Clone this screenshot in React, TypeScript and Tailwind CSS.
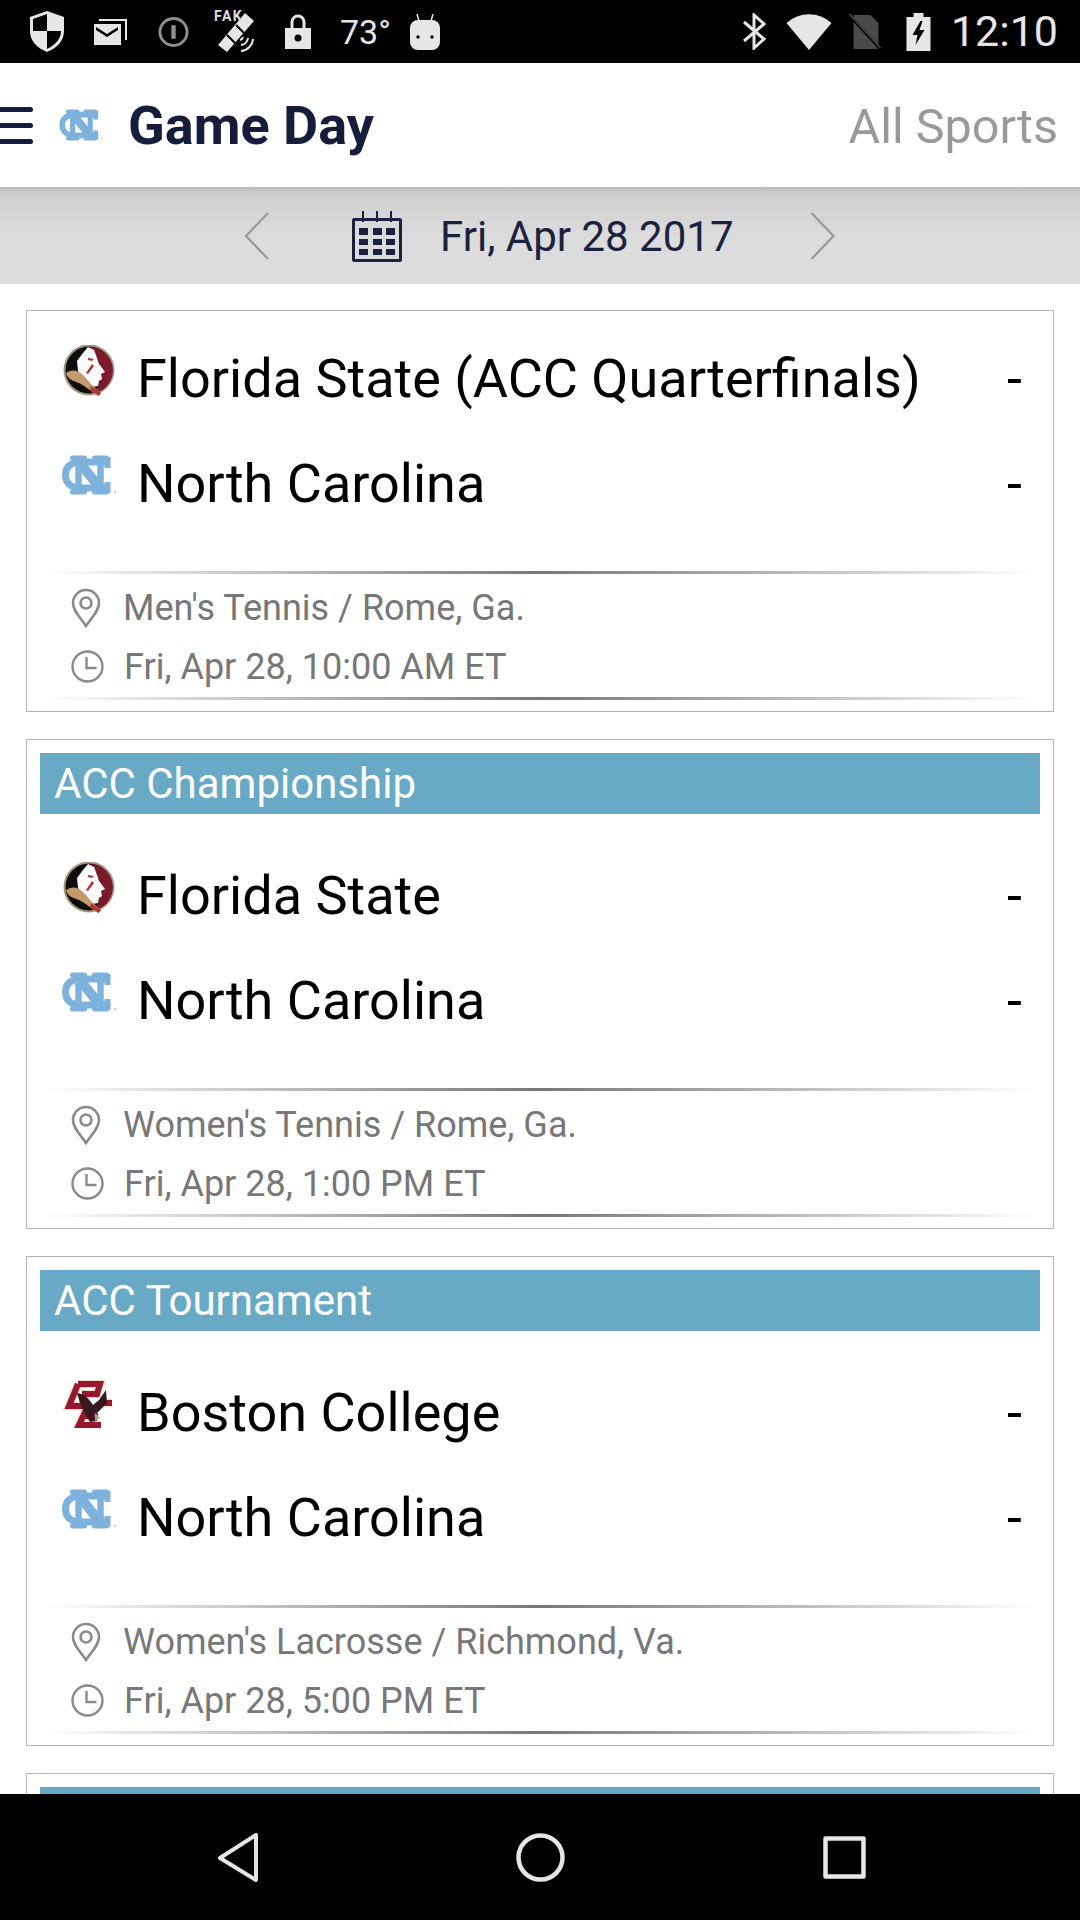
import React from "react";

const FONT = "font-['Roboto','Liberation_Sans',sans-serif]";

function NCLogo({ className }: { className: string }) {
  return (
    <svg viewBox="0 0 55 40" className={className} fill="none" stroke="#7db2dc">
      <path d="M44 7H20C8 7 4 13 4 20s4 13 16 13h24" strokeWidth="7" />
      <path d="M16 5 40 35" strokeWidth="10" />
      <path d="M17 4v32M39 4v32" strokeWidth="6.5" />
      <path d="M46 2v11M46 27v11" strokeWidth="6" />
      <path d="M11 3h12M11 37h12M33 3h12M33 37h12" strokeWidth="5" strokeLinecap="round" />
      <circle cx="53.5" cy="37" r="1.2" fill="#b9d3e6" stroke="none" />
    </svg>
  );
}

function FSULogo({ className }: { className: string }) {
  return (
    <svg viewBox="0 0 52 52" className={className}>
      <circle cx="26" cy="25" r="25.5" fill="#a3957a" />
      <circle cx="26" cy="25" r="23.5" fill="#0d0d0d" />
      <path d="M27 2a23.5 23.5 0 0 1 6 46L38 30 31 10Z" fill="#7c1a2b" />
      <path d="M20 8 25 2l6 3 3 8 2 6 6 8-4 2 1 5-3 2-1 5-6 1-8-7-6-9-1-10Z" fill="#fff" />
      <path d="M25 13l6 1-2 2-4-1ZM29 19l-6 9 2 1 6-8Z" fill="#b3352e" />
      <path d="M3 28c6-4 12-3 17 2s10 12 18 18l-3 3c-7-5-12-9-17-12S5 36 3 28Z" fill="#c29a6c" />
      <path d="M28 41l10 7-2 3-9-6Z" fill="#b3352e" />
    </svg>
  );
}

function BCLogo({ className }: { className: string }) {
  return (
    <svg viewBox="0 0 54 48" className={className} fill="none">
      <g stroke="#e9d9bb" strokeWidth="8.5" strokeLinejoin="miter">
        <path d="M16 4 7 26h14M16 4h22l-3 10H20M24 30 17 45h22M20 36h16M38 23h12" />
      </g>
      <g stroke="#97172f" strokeWidth="6" strokeLinejoin="miter">
        <path d="M16 4 7 26h14M16 4h22l-3 10H20M24 30 17 45h22M20 36h16M38 23h12" />
      </g>
      <path d="M15 13c8 1 12 6 16 12l6-5 7-10 1 13-9 9-5 3 4 6-7 1-5-8-5-11Z" fill="#35191f" />
      <path d="M33 33l5 5-5 3Z" fill="#a9a491" />
    </svg>
  );
}

function Pin() {
  return (
    <svg viewBox="0 0 30 40" className="h-10 w-[30px]" fill="none" stroke="#8a8a8a" strokeWidth="2.6">
      <path d="M15 38C9 29 2 23 2 15a13 13 0 0 1 26 0c0 8-7 14-13 23Z" />
      <circle cx="15" cy="15" r="5.5" />
    </svg>
  );
}

function Clock() {
  return (
    <svg viewBox="0 0 33 33" className="h-[33px] w-[33px]" fill="none" stroke="#8a8a8a" strokeWidth="2.4">
      <circle cx="16.5" cy="16.5" r="15" />
      <path d="M15.5 7v11h10" />
    </svg>
  );
}

function Divider() {
  return <div className="h-[3px] bg-gradient-to-r from-transparent via-[#777777] to-transparent" />;
}

function Team({ logo, name }: { logo: "fsu" | "nc" | "bc"; name: string }) {
  return (
    <div className="flex h-[105px] items-center">
      <div className="flex h-[105px] w-[56px] shrink-0 justify-center pt-[19px]">
        {logo === "fsu" && <FSULogo className="h-[52px] w-[52px] blur-[0.4px]" />}
        {logo === "nc" && <NCLogo className="mt-[5px] h-[40px] w-[56px] blur-[0.4px]" />}
        {logo === "bc" && <BCLogo className="mt-[1px] h-[48px] w-[54px] blur-[0.4px]" />}
      </div>
      <span className="ml-[20px] flex-1 text-[54px] leading-none text-black">{name}</span>
      <span className="mr-[18px] text-[54px] leading-none text-black">-</span>
    </div>
  );
}

function Card({
  title,
  top,
  name,
  sport,
  time,
}: {
  title?: string;
  top: "fsu" | "bc";
  name: string;
  sport: string;
  time: string;
}) {
  return (
    <div className="shrink-0 border border-[#b5b5b5] bg-white px-[13px]">
      {title ? (
        <div className="mt-[13px] mb-[29px] flex h-[61px] items-center bg-[#68a9c6] pl-[14px] text-[42px] leading-none text-white">
          {title}
        </div>
      ) : (
        <div className="h-[15px]" />
      )}
      <div className="pl-[21px]">
        <Team logo={top} name={name} />
        <Team logo="nc" name="North Carolina" />
      </div>
      <div className="mt-[35px]">
        <Divider />
      </div>
      <div className="flex h-[59px] items-center pl-[31px] pt-[8px]">
        <Pin />
        <span className="ml-[22px] text-[36px] leading-none text-[#777777]">{sport}</span>
      </div>
      <div className="flex h-[59px] items-center pl-[31px] pt-[8px]">
        <Clock />
        <span className="ml-[20px] text-[36px] leading-none text-[#777777]">{time}</span>
      </div>
      <div className="mt-[5px] mb-[11px]">
        <Divider />
      </div>
    </div>
  );
}

function StatusBar() {
  const c = "#e6e6e6";
  return (
    <div className="flex h-[63px] shrink-0 items-center bg-black pl-[30px] pr-[22px]">
      <svg viewBox="0 0 34 41" className="h-[41px] w-[34px]">
        <path d="M17 0 34 6v14c0 10-7 17-17 21C7 37 0 30 0 20V6Z" fill={c} />
        <path d="M17 3v17H3V8ZM17 20h14c0 8-6 14-14 18Z" fill="#000" />
      </svg>
      <svg viewBox="0 0 33 27" className="ml-[30px] h-[27px] w-[33px]" fill={c}>
        <path d="M0 6h27v21H0Z" />
        <path d="M5 1h28v21h-2V3H5Z" />
        <path d="M2 9l11 7 11-7v3l-11 7L2 12Z" fill="#000" />
      </svg>
      <svg viewBox="0 0 32 32" className="ml-[31px] h-[32px] w-[31px]" fill="none" stroke="#8f8f8f" strokeWidth="3">
        <circle cx="16" cy="16" r="14" />
        <path d="M16 9v14" strokeWidth="4.5" />
      </svg>
      <div className="relative ml-[25px] h-[43px] w-[44px]">
        <svg viewBox="0 0 44 43" className="h-[43px] w-[44px]">
          <path d="M4 35 31 3l9 8L13 42Z" fill={c} />
          <path d="M13 25l8 8M22 15l8 8" stroke="#000" strokeWidth="2" />
          <path d="M27 41a13 13 0 0 0 12-12M27 35a8 8 0 0 0 7-7M26 30a4 4 0 0 0 3-3" fill="none" stroke={c} strokeWidth="2" />
        </svg>
        <span className="absolute left-0 top-[-1px] text-[14px] font-bold leading-none tracking-[1.5px] text-[#dddddd]">FAK</span>
      </div>
      <svg viewBox="0 0 26 35" className="ml-[27px] h-[35px] w-[26px]">
        <path d="M7 15V8a6 6 0 0 1 12 0v7" fill="none" stroke={c} strokeWidth="3" />
        <path d="M0 14h26v21H0Z" fill={c} />
        <circle cx="13" cy="24" r="3.5" fill="#000" />
      </svg>
      <span className="ml-[29px] w-[42px] whitespace-nowrap text-[34px] leading-none text-[#e6e6e6]">73°</span>
      <svg viewBox="0 0 30 36" className="ml-[28px] h-[36px] w-[30px]">
        <path d="M7 0l2 7M23 0l-2 7" stroke={c} strokeWidth="1.5" />
        <rect x="0" y="6" width="30" height="30" rx="8" fill={c} />
        <circle cx="8" cy="23" r="1.7" fill="#000" />
        <circle cx="22" cy="23" r="1.7" fill="#000" />
      </svg>
      <div className="flex-1" />
      <svg viewBox="0 0 23 37" className="h-[37px] w-[23px]" fill="none" stroke={c} strokeWidth="3">
        <path d="M1 9 21 26 11 35V2l10 9L1 28" />
      </svg>
      <svg viewBox="0 0 45 36" className="ml-[20px] h-[36px] w-[46px]">
        <path d="M0 9a33 33 0 0 1 45 0L22.5 36Z" fill={c} />
      </svg>
      <svg viewBox="0 0 33 35" className="ml-[16px] h-[35px] w-[34px]">
        <path d="M5 1h17l8 8v26H5Z" fill="#4a4a4a" />
        <path d="M0 0 32 35" stroke="#000" strokeWidth="3" />
        <path d="M1 0 32 34" stroke="#4a4a4a" strokeWidth="1.5" />
      </svg>
      <svg viewBox="0 0 24 38" className="ml-[24px] h-[38px] w-[25px]">
        <path d="M7 0h10v4h7v34H0V4h7Z" fill={c} />
        <path d="M14 8 6 22h5l-2 10 9-15h-5l3-9Z" fill="#000" />
      </svg>
      <span className="ml-[20px] text-[43px] leading-none text-[#e6e6e6]">12:10</span>
    </div>
  );
}

export default function App() {
  return (
    <div className={`flex h-[1920px] w-[1080px] flex-col overflow-hidden bg-white ${FONT}`}>
      <StatusBar />
      <div className="flex h-[124px] shrink-0 items-center bg-white pr-[22px]">
        <div className="flex h-[37px] w-[33px] flex-col justify-between">
          <div className="h-[5px] rounded-r bg-[#151c3c]" />
          <div className="h-[5px] rounded-r bg-[#151c3c]" />
          <div className="h-[5px] rounded-r bg-[#151c3c]" />
        </div>
        <NCLogo className="ml-[26px] h-[32px] w-[44px] blur-[0.4px]" />
        <span className="ml-[25px] pt-[2px] text-[54px] font-bold leading-none text-[#151c3c]">Game Day</span>
        <span className="ml-auto pt-[4px] text-[48.5px] leading-none text-[#999999]">All Sports</span>
      </div>
      <div className="flex h-[97px] shrink-0 items-center bg-[linear-gradient(to_bottom,#bdbdbd_0px,#cfcfcf_8px,#dcdcdc_50px)] pl-[244px]">
        <svg viewBox="0 0 25 48" className="h-[48px] w-[25px]" fill="none" stroke="#9a9a9a" strokeWidth="2.2">
          <path d="M24 1 2 24l22 23" />
        </svg>
        <svg viewBox="0 0 52 52" className="ml-[81px] h-[52px] w-[54px]" fill="#19233f">
          <path d="M3 8h46a2 2 0 0 1 2 2v40a2 2 0 0 1-2 2H3a2 2 0 0 1-2-2V10a2 2 0 0 1 2-2Zm1 3v38h44V11Z" />
          <path d="M11 1h2v11h-2ZM25 1h2v11h-2ZM39 1h2v11h-2Z" />
          <path d="M8 18h9v7H8ZM22 18h9v7h-9ZM35 18h9v7h-9ZM8 29h9v6H8ZM22 29h9v6h-9ZM35 29h9v6h-9ZM8 39h9v6H8ZM22 39h9v6h-9ZM35 39h9v6h-9Z" />
        </svg>
        <span className="ml-[36px] w-[291px] whitespace-nowrap pt-[2px] text-[42px] leading-none text-[#19233f]">Fri, Apr 28 2017</span>
        <svg viewBox="0 0 25 48" className="ml-[79px] h-[48px] w-[26px]" fill="none" stroke="#9a9a9a" strokeWidth="2.2">
          <path d="M1 1l22 23L1 47" />
        </svg>
      </div>
      <main className="flex min-h-0 flex-1 flex-col gap-[27px] overflow-hidden bg-white px-[26px] pt-[26px]">
        <Card top="fsu" name="Florida State (ACC Quarterfinals)" sport="Men's Tennis / Rome, Ga." time="Fri, Apr 28, 10:00 AM ET" />
        <Card title="ACC Championship" top="fsu" name="Florida State" sport="Women's Tennis / Rome, Ga." time="Fri, Apr 28, 1:00 PM ET" />
        <Card title="ACC Tournament" top="bc" name="Boston College" sport="Women's Lacrosse / Richmond, Va." time="Fri, Apr 28, 5:00 PM ET" />
        <div className="h-[60px] shrink-0 border-x border-t border-[#b5b5b5] px-[13px] pt-[13px]">
          <div className="h-[60px] bg-[#68a9c6]" />
        </div>
      </main>
      <div className="flex h-[126px] shrink-0 items-center justify-between bg-black pl-[217px] pr-[214px]">
        <svg viewBox="0 0 41 49" className="h-[49px] w-[41px]" fill="none" stroke="#e6e6e6" strokeWidth="4" strokeLinejoin="round">
          <path d="M39 2v45L3 25Z" />
        </svg>
        <svg viewBox="0 0 49 49" className="h-[49px] w-[49px]" fill="none" stroke="#e6e6e6" strokeWidth="4.5">
          <circle cx="24.5" cy="24.5" r="22" />
        </svg>
        <svg viewBox="0 0 43 43" className="h-[43px] w-[43px]" fill="none" stroke="#e6e6e6" strokeWidth="4.5" strokeLinejoin="round">
          <rect x="2.5" y="2.5" width="38" height="38" />
        </svg>
      </div>
    </div>
  );
}
